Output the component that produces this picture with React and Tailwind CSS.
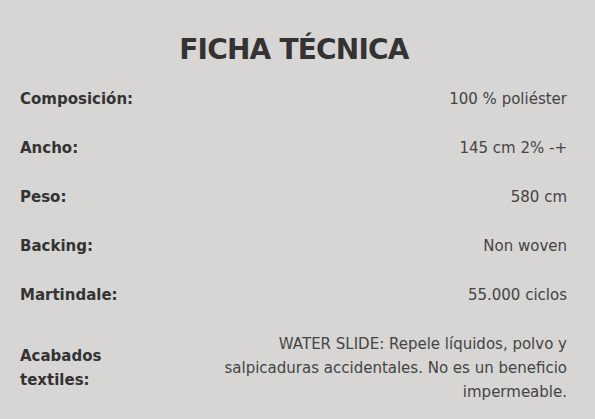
const rows = [
  { label: 'Composición:', value: '100 % poliéster' },
  { label: 'Ancho:', value: '145 cm 2% -+' },
  { label: 'Peso:', value: '580 cm' },
  { label: 'Backing:', value: 'Non woven' },
  { label: 'Martindale:', value: '55.000 ciclos' },
];

export default function App() {
  return (
    <div className="w-[595px] h-[419px] bg-[#d7d6d5] text-[#333] font-['DejaVu_Sans',sans-serif] overflow-hidden">
      {/* Title */}
      <div className="h-[75px] flex items-center justify-center pt-[24px]">
        <h1 className="text-[28px] font-bold tracking-[-0.8px] mr-[7px]">FICHA TÉCNICA</h1>
      </div>

      {/* Rows */}
      <div className="pl-[20px] pr-[28px] text-[15px]">
        {rows.map((row) => (
          <div key={row.label} className="h-[49px] flex items-center justify-between">
            <span className="font-bold">{row.label}</span>
            <span className="text-[#444]">{row.value}</span>
          </div>
        ))}
        <div className="flex items-center justify-between pt-[12px] leading-[24px]">
          <span className="font-bold w-[110px]">Acabados textiles:</span>
          <span className="text-[#444] text-right w-[358px]">
            WATER SLIDE: Repele líquidos, polvo y salpicaduras accidentales. No es un beneficio impermeable.
          </span>
        </div>
      </div>
    </div>
  );
}
